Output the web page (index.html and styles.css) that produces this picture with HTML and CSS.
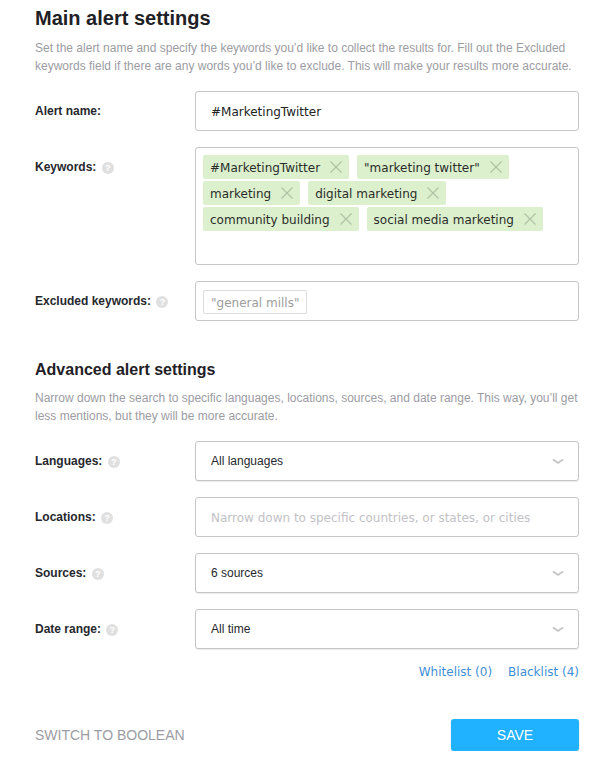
FILE: index.html
```html
<!DOCTYPE html>
<html lang="en">
<head>
    <meta charset="UTF-8">
    <title>Alert settings</title>
    <link rel="stylesheet" href="styles.css">
</head>
<body>
    <div class="settings">
        <h1>Main alert settings</h1>
        <p class="intro intro-main">Set the alert name and specify the keywords you’d like to collect the results for. Fill out the Excluded keywords field if there are any words you’d like to exclude. This will make your results more accurate.</p>

        <div class="row">
            <label class="label">Alert name:</label>
            <div class="field field-text">#MarketingTwitter</div>
        </div>

        <div class="row">
            <label class="label">Keywords: <span class="help">?</span></label>
            <div class="field field-tags">
                <span class="tag">#MarketingTwitter <svg class="tag-x" viewBox="0 0 12 12"><path d="M0.5 0.5 L11.5 11.5 M11.5 0.5 L0.5 11.5"/></svg></span>
                <span class="tag">"marketing twitter" <svg class="tag-x" viewBox="0 0 12 12"><path d="M0.5 0.5 L11.5 11.5 M11.5 0.5 L0.5 11.5"/></svg></span>
                <span class="tag">marketing <svg class="tag-x" viewBox="0 0 12 12"><path d="M0.5 0.5 L11.5 11.5 M11.5 0.5 L0.5 11.5"/></svg></span>
                <span class="tag">digital marketing <svg class="tag-x" viewBox="0 0 12 12"><path d="M0.5 0.5 L11.5 11.5 M11.5 0.5 L0.5 11.5"/></svg></span>
                <span class="tag">community building <svg class="tag-x" viewBox="0 0 12 12"><path d="M0.5 0.5 L11.5 11.5 M11.5 0.5 L0.5 11.5"/></svg></span>
                <span class="tag">social media marketing <svg class="tag-x" viewBox="0 0 12 12"><path d="M0.5 0.5 L11.5 11.5 M11.5 0.5 L0.5 11.5"/></svg></span>
            </div>
        </div>

        <div class="row">
            <label class="label">Excluded keywords: <span class="help">?</span></label>
            <div class="field field-excluded"><span class="hint-tag">"general mills"</span></div>
        </div>

        <h2>Advanced alert settings</h2>
        <p class="intro intro-advanced">Narrow down the search to specific languages, locations, sources, and date range. This way, you’ll get less mentions, but they will be more accurate.</p>

        <div class="row">
            <label class="label">Languages: <span class="help">?</span></label>
            <div class="field field-select">All languages <svg class="chevron" viewBox="0 0 12 7"><path d="M1 1.5 L6 5 L11 1.5"/></svg></div>
        </div>

        <div class="row">
            <label class="label">Locations: <span class="help">?</span></label>
            <div class="field field-text placeholder">Narrow down to specific countries, or states, or cities</div>
        </div>

        <div class="row">
            <label class="label">Sources: <span class="help">?</span></label>
            <div class="field field-select">6 sources <svg class="chevron" viewBox="0 0 12 7"><path d="M1 1.5 L6 5 L11 1.5"/></svg></div>
        </div>

        <div class="row">
            <label class="label">Date range: <span class="help">?</span></label>
            <div class="field field-select">All time <svg class="chevron" viewBox="0 0 12 7"><path d="M1 1.5 L6 5 L11 1.5"/></svg></div>
        </div>

        <div class="lists">
            <a href="#">Whitelist (0)</a>
            <a href="#">Blacklist (4)</a>
        </div>

        <div class="footer">
            <a class="switch" href="#">SWITCH TO BOOLEAN</a>
            <button class="save" type="button">SAVE</button>
        </div>
    </div>
</body>
</html>
```

FILE: styles.css
```css
* {
    box-sizing: border-box;
}

body {
    margin: 0;
    background: #fff;
    font-family: "Liberation Sans", Arial, sans-serif;
    color: #222;
}

.settings {
    width: 544px;
    margin-left: 35px;
    padding-top: 5px;
}

h1 {
    margin: 0;
    height: 26px;
    font-size: 20px;
    line-height: 26px;
    font-weight: bold;
    color: #1f2126;
}

h2 {
    margin: 38px 0 0;
    height: 22px;
    font-size: 16px;
    line-height: 22px;
    font-weight: bold;
    color: #1f2126;
}

.intro {
    margin: 0;
    font-size: 12px;
    line-height: 18px;
    color: #9c9ca3;
}

.intro-main {
    margin-top: 8px;
    margin-bottom: 16px;
}

.intro-advanced {
    margin-top: 8px;
    margin-bottom: 16px;
}

.row {
    display: flex;
    margin-bottom: 16px;
}

.label {
    display: block;
    flex: 0 0 160px;
    padding-top: 11px;
    font-size: 12px;
    line-height: 18px;
    font-weight: bold;
    color: #26282d;
}

.help {
    display: inline-block;
    width: 12px;
    height: 12px;
    margin-left: 2px;
    border-radius: 50%;
    background: #e0e0e0;
    color: #fff;
    font-size: 9px;
    line-height: 12px;
    text-align: center;
    vertical-align: 0;
}

.field {
    position: relative;
    flex: 0 0 384px;
    min-height: 40px;
    border: 1px solid #c6c6c6;
    border-radius: 3px;
    background: #fff;
}

.field-text {
    padding: 2px 0 0 15px;
    font-family: "DejaVu Sans", sans-serif;
    font-size: 12px;
    line-height: 36px;
    color: #222;
}

.placeholder {
    color: #c2c2c6;
}

.field-tags {
    display: flex;
    flex-wrap: wrap;
    align-content: flex-start;
    gap: 2px 8px;
    height: 118px;
    padding: 7px;
}

.tag {
    display: flex;
    align-items: center;
    gap: 10px;
    height: 24px;
    padding: 1px 7px 0;
    border-radius: 2px;
    background: #dcf0cd;
    font-family: "DejaVu Sans", sans-serif;
    font-size: 12px;
    color: #2b2d2b;
}

.tag-x {
    width: 12px;
    height: 12px;
    margin-top: -1px;
    fill: none;
    stroke: #b0c2a6;
    stroke-width: 1.2;
}

.field-excluded {
    display: flex;
    align-items: flex-start;
    padding: 8px 7px 6px;
}

.hint-tag {
    height: 24px;
    padding: 0 7px;
    border: 1px solid #dcdcdc;
    border-radius: 2px;
    font-family: "DejaVu Sans", sans-serif;
    font-size: 12px;
    line-height: 24px;
    color: #9c9c9c;
}

.field-select {
    display: flex;
    align-items: center;
    justify-content: space-between;
    padding: 0 14px 0 15px;
    font-size: 12px;
    color: #26282d;
    box-shadow: 0 1px 1px rgba(0, 0, 0, 0.08);
}

.chevron {
    width: 12px;
    height: 7px;
    fill: none;
    stroke: #c4c4c4;
    stroke-width: 1.8;
}

.lists {
    display: flex;
    justify-content: flex-end;
    gap: 16px;
    margin-top: -2px;
    font-family: "DejaVu Sans", sans-serif;
    font-size: 12px;
    line-height: 18px;
}

.lists a {
    color: #3f8fd6;
    text-decoration: none;
}

.footer {
    display: flex;
    align-items: center;
    justify-content: space-between;
    margin-top: 38px;
}

.switch {
    font-size: 14px;
    color: #9c9ca3;
    text-decoration: none;
}

.save {
    width: 128px;
    height: 32px;
    border: 0;
    border-radius: 3px;
    background: #20b2ff;
    color: #fff;
    font-family: "Liberation Sans", Arial, sans-serif;
    font-size: 14px;
    box-shadow: 0 1px 2px rgba(0, 0, 0, 0.15);
}
```
